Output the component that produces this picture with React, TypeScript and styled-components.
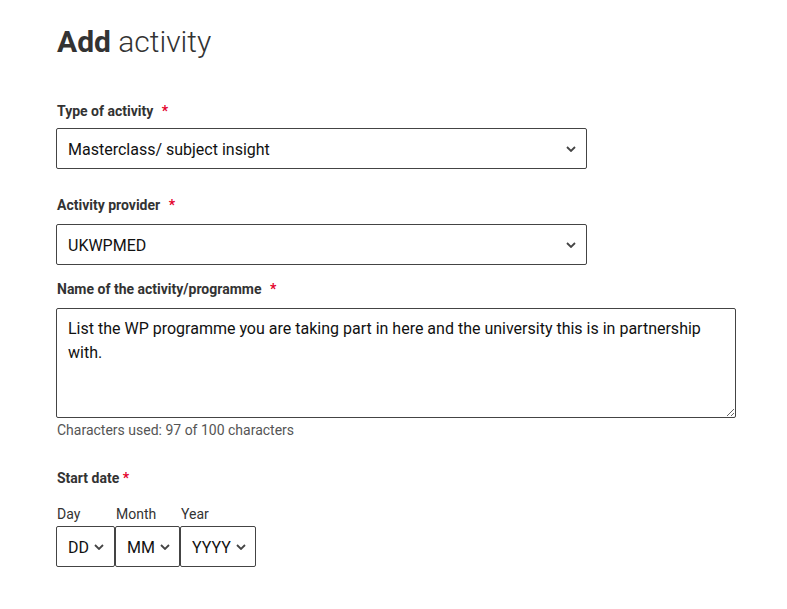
import React from "react";
import styled, { createGlobalStyle } from "styled-components";

const GlobalStyle = createGlobalStyle`
  html, body {
    margin: 0;
    padding: 0;
    background: #ffffff;
  }
  body {
    font-family: Roboto, "Liberation Sans", Arial, sans-serif;
    color: #333333;
  }
  * { box-sizing: border-box; }
`;

const Page = styled.main`
  padding: 24px 0 40px 56px;
  width: 787px;
`;

const Heading = styled.h1`
  margin: 0;
  font-size: 30px;
  line-height: 36px;
  font-weight: 300;
  color: #333333;
  padding-left: 1px;
  strong {
    font-weight: 700;
  }
`;

const Form = styled.form`
  display: flex;
  flex-direction: column;
  margin-top: 41px;
`;

const Field = styled.div<{ $gapAfter?: number }>`
  display: flex;
  flex-direction: column;
  margin-bottom: ${(p) => p.$gapAfter ?? 0}px;
`;

const Label = styled.label<{ $gap?: number }>`
  display: block;
  font-size: 14px;
  line-height: 20px;
  font-weight: 700;
  color: #333333;
  padding-left: 1px;
  margin-bottom: ${(p) => p.$gap ?? 7}px;
`;

const Required = styled.span<{ $tight?: boolean }>`
  color: #e4002b;
  margin-left: ${(p) => (p.$tight ? "0" : "5px")};
`;

const SelectBox = styled.div<{ $width?: number }>`
  display: flex;
  align-items: center;
  justify-content: space-between;
  width: ${(p) => (p.$width ? `${p.$width}px` : "auto")};
  height: 41px;
  padding: 1px 10px 0 11px;
  border: 1px solid #444444;
  border-radius: 2px;
  background: #ffffff;
  font-size: 16px;
  color: #111111;
  gap: 5px;
  cursor: pointer;
`;

const SelectText = styled.span`
  white-space: nowrap;
`;

const Chevron = styled.svg`
  flex: none;
  width: 10px;
  height: 6px;
`;

const TextArea = styled.textarea`
  display: block;
  width: 680px;
  height: 110px;
  padding: 8px 11px;
  border: 1px solid #444444;
  border-radius: 2px;
  font-family: Roboto, "Liberation Sans", Arial, sans-serif;
  font-size: 16px;
  line-height: 24px;
  color: #111111;
  resize: vertical;
  outline: none;
`;

const Counter = styled.div`
  font-size: 14px;
  line-height: 20px;
  color: #555555;
  padding-left: 1px;
  margin-top: 2px;
`;

const DateRow = styled.div`
  display: flex;
  gap: 0;
  margin-top: 16px;
`;

const DatePart = styled.div`
  display: flex;
  flex-direction: column;
`;

const PartLabel = styled.label`
  font-size: 14px;
  line-height: 20px;
  color: #333333;
  padding-left: 1px;
  margin-bottom: 2px;
`;

const ChevronIcon = () => (
  <Chevron viewBox="0 0 10 6" aria-hidden="true">
    <path d="M1 1 L5 5 L9 1" fill="none" stroke="#444" strokeWidth="1.8" />
  </Chevron>
);

const Select = ({ value, width }: { value: string; width?: number }) => (
  <SelectBox role="combobox" $width={width}>
    <SelectText>{value}</SelectText>
    <ChevronIcon />
  </SelectBox>
);

export default function App() {
  const text =
    "List the WP programme you are taking part in here and the university this is in partnership with.";
  return (
    <>
      <GlobalStyle />
      <Page>
        <Heading>
          <strong>Add</strong> activity
        </Heading>
        <Form>
          <Field $gapAfter={26}>
            <Label>
              Type of activity <Required>*</Required>
            </Label>
            <Select value="Masterclass/ subject insight" width={531} />
          </Field>
          <Field $gapAfter={14}>
            <Label $gap={9}>
              Activity provider <Required>*</Required>
            </Label>
            <Select value="UKWPMED" width={531} />
          </Field>
          <Field $gapAfter={28}>
            <Label $gap={9}>
              Name of the activity/programme <Required>*</Required>
            </Label>
            <TextArea defaultValue={text} />
            <Counter>Characters used: 97 of 100 characters</Counter>
          </Field>
          <Field>
            <Label $gap={0}>
              Start date <Required $tight>*</Required>
            </Label>
            <DateRow>
              <DatePart>
                <PartLabel>Day</PartLabel>
                <Select value="DD" width={59} />
              </DatePart>
              <DatePart>
                <PartLabel>Month</PartLabel>
                <Select value="MM" width={65} />
              </DatePart>
              <DatePart>
                <PartLabel>Year</PartLabel>
                <Select value="YYYY" width={76} />
              </DatePart>
            </DateRow>
          </Field>
        </Form>
      </Page>
    </>
  );
}
